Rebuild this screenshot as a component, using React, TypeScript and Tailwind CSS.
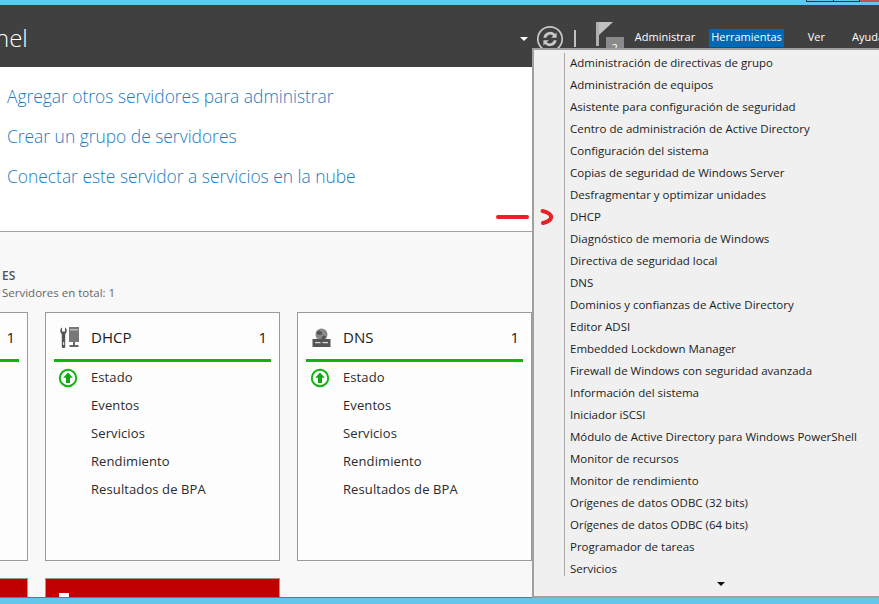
import React from "react";

const font = { fontFamily: '"Open Sans", "Noto Sans", sans-serif' };

const menu = [
  "Administración de directivas de grupo",
  "Administración de equipos",
  "Asistente para configuración de seguridad",
  "Centro de administración de Active Directory",
  "Configuración del sistema",
  "Copias de seguridad de Windows Server",
  "Desfragmentar y optimizar unidades",
  "DHCP",
  "Diagnóstico de memoria de Windows",
  "Directiva de seguridad local",
  "DNS",
  "Dominios y confianzas de Active Directory",
  "Editor ADSI",
  "Embedded Lockdown Manager",
  "Firewall de Windows con seguridad avanzada",
  "Información del sistema",
  "Iniciador iSCSI",
  "Módulo de Active Directory para Windows PowerShell",
  "Monitor de recursos",
  "Monitor de rendimiento",
  "Orígenes de datos ODBC (32 bits)",
  "Orígenes de datos ODBC (64 bits)",
  "Programador de tareas",
  "Servicios",
];

function UpIcon() {
  return (
    <svg width="20" height="20" viewBox="0 0 20 20" className="shrink-0">
      <circle cx="10" cy="10" r="8.200" fill="#fff" stroke="#10b510" strokeWidth="2" />
      <path d="M10 4.500 14.800 9.800H12V15H8V9.800H5.200Z" fill="#10a810" />
    </svg>
  );
}

function DhcpIcon() {
  return (
    <svg width="20" height="22" viewBox="0 0 20 22">
      <path d="M2 1.500V5.500H5V1.500C7 2.500 7.500 6 5.200 8V20.500a1.700 1.700 0 0 1-3.400 0V8C-.5 6 0 2.500 2 1.500Z" fill="#555" />
      <rect x="3" y="16" width="1.200" height="3" fill="#ddd" />
      <rect x="9" y="1" width="10" height="15" fill="#777" />
      <rect x="10" y="3" width="8" height="1.500" fill="#bbb" />
      <rect x="13" y="16" width="2" height="3" fill="#666" />
      <rect x="9.500" y="19" width="9" height="2" fill="#666" />
    </svg>
  );
}

function DnsIcon() {
  return (
    <svg width="19" height="19" viewBox="0 0 19 19">
      <circle cx="9.500" cy="6.500" r="6" fill="#888" />
      <path d="M5 3.500c2-1.500 4-.5 5 1s-1 3-3 2.500S4 5 5 3.500ZM11 8c1.500-.5 3 0 3 1-1 2-3 2.500-4 2.500S9.500 8.500 11 8Z" fill="#555" />
      <rect x="0.500" y="11" width="18" height="8" fill="#555" />
      <rect x="3" y="14" width="5.500" height="1.200" fill="#ddd" />
      <rect x="10.500" y="14" width="5.500" height="1.200" fill="#ddd" />
    </svg>
  );
}

function Card({ icon, title, clipped }: { icon?: React.ReactNode; title?: string; clipped?: boolean }) {
  return (
    <div className="w-[235px] h-[249px] shrink-0 border border-[#9a9a9a] bg-[#fdfdfd] px-[8px]">
      <div className="h-[46px] flex items-center pt-[2px] text-[#1a1a1a]">
        <div className="w-[37px] pl-[6px] flex items-center">{icon}</div>
        <span className="text-[15px] flex-1">{title}</span>
        <span className="text-[15px] pr-[4px]">1</span>
      </div>
      <div className="h-[3px] bg-[#0eb50e]" />
      <div className="flex flex-col pt-[2px] text-[13px] tracking-[0.1px] text-[#2b2b2b]">
        {["Estado", "Eventos", "Servicios", "Rendimiento", "Resultados de BPA"].map((t, i) => (
          <div key={t} className="h-[28px] flex items-center">
            <div className="w-[37px] pl-[4px]">{i === 0 && !clipped ? <UpIcon /> : null}</div>
            <span>{t}</span>
          </div>
        ))}
      </div>
    </div>
  );
}

function RedCard({ mark }: { mark?: boolean }) {
  return (
    <div className="w-[235px] h-[19px] shrink-0 border border-b-0 border-[#9a9a9a] bg-[#c00000] pl-[13px] flex items-end">
      {mark ? <div className="w-[10px] h-[4px] bg-white" /> : null}
    </div>
  );
}

export default function App() {
  return (
    <div className="relative w-[879px] h-[604px] overflow-hidden flex flex-col bg-[#f8f8f8]" style={font}>
      <div className="h-[5px] bg-[#63c6ea] shrink-0 flex justify-end">
        <div className="w-[28px] h-[2px] border border-t-0 border-[#333]" />
        <div className="w-[26px] h-[2px] border border-t-0 border-l-0 border-[#333]" />
        <div className="w-[19px] h-[2px] bg-[#c75050]" />
      </div>
      <header className="h-[62px] shrink-0 bg-[#404040] flex items-center text-white">
        <div className="text-[24px] font-light -ml-[5px] mt-[4px] flex-1 leading-none">nel</div>
        <div className="flex items-center pt-[5px] h-full">
          <span className="w-0 h-0 border-x-[4px] border-x-transparent border-t-[4px] border-t-white mr-[8px]" />
          <svg width="28" height="28" viewBox="0 0 28 28" className="mr-[10px]">
            <circle cx="14" cy="14" r="12.200" fill="none" stroke="#c8c8c8" strokeWidth="1.700" />
            <g transform="translate(14 14) scale(1.2) translate(-14 -14)">
              <path d="M8.500 13a5.700 5.700 0 0 1 9.700-3.200l1.300-1.300v4.500H15l1.700-1.700a3.500 3.500 0 0 0-5.800 1.700ZM19.500 15a5.700 5.700 0 0 1-9.700 3.200l-1.300 1.300V15H13l-1.700 1.700a3.500 3.500 0 0 0 5.800-1.700Z" fill="#c8c8c8" />
            </g>
          </svg>
          <div className="w-[2px] h-[17px] bg-[#c0c0c0] mr-[20px]" />
          <div className="relative w-[28px] h-[34px] mr-[11px]">
            <svg width="18" height="24" viewBox="0 0 18 24" className="absolute left-0 top-0">
              <rect x="0" y="0" width="3" height="24" fill="#b0b0b0" />
              <path d="M3 0H17L3 13Z" fill="#c0c0c0" />
            </svg>
            <div className="absolute left-[10px] top-[15px] w-[18px] h-[14px] bg-[#8a8a8a] text-[11px] text-white flex justify-center leading-none pt-[5px]">2</div>
          </div>
          <span className="text-[11px] mr-[14px] -mt-[2px]">Administrar</span>
          <span className="text-[11px] bg-[#0068b4] h-[18px] flex items-center px-[2px] mr-[24px] -mt-[2px]">Herramientas</span>
          <span className="text-[11px] mr-[27px] -mt-[2px]">Ver</span>
          <span className="text-[11px] w-[27px] overflow-hidden whitespace-nowrap -mt-[2px]">Ayuda</span>
        </div>
      </header>
      <section className="h-[165px] shrink-0 bg-white border-b border-[#a0a0a0] pl-[7px] pt-[18px] flex flex-col gap-[18px] text-[17.400px] font-light text-[#1b7ac4] leading-[22px]">
        <div>Agregar otros servidores para administrar</div>
        <div>Crear un grupo de servidores</div>
        <div>Conectar este servidor a servicios en la nube</div>
      </section>
      <section className="flex-1 w-[532px] overflow-hidden flex flex-col items-end min-h-0">
        <div className="self-start pl-[2px] pt-[35px] h-[80px] shrink-0">
          <div className="text-[12px] font-semibold text-[#555] leading-[17px]">ES</div>
          <div className="text-[11.500px] text-[#666] leading-[18px]">Servidores en total: 1</div>
        </div>
        <div className="flex gap-[17px] justify-end">
          <Card clipped title="" />
          <Card icon={<DhcpIcon />} title="DHCP" />
          <Card icon={<DnsIcon />} title="DNS" />
        </div>
        <div className="flex gap-[17px] justify-end mt-[17px] w-full">
          <RedCard />
          <RedCard mark />
          <div className="w-[235px] shrink-0" />
        </div>
      </section>
      <div className="h-[7px] shrink-0 bg-[#63c6ea] border-t border-[#4a7f99]" />
      <div className="absolute left-[532px] top-[48px] w-[347px] h-[550px] bg-[#f0f0f0] border-2 border-r-0 border-[#a0a0a0] text-[11.500px] text-[#1c1c1c]">
        <div className="ml-[30px] mt-[3px] border-l border-[#a8a8a8] h-[523px] pl-[5px] flex flex-col">
          {menu.map((m) => (
            <div key={m} className="h-[22px] shrink-0 flex items-center whitespace-nowrap relative -top-[1px]">{m}</div>
          ))}
        </div>
        <div className="flex justify-center pl-[29px] mt-[6px] mr-[1px]">
          <span className="w-0 h-0 border-x-[4px] border-x-transparent border-t-[4px] border-t-[#111]" />
        </div>
      </div>
      <svg width="60" height="24" viewBox="0 0 60 24" className="absolute left-[495px] top-[206px]">
        <path d="M3 11H32" stroke="#e8202a" strokeWidth="4" strokeLinecap="round" fill="none" />
        <path d="M47.500 5C53 6 57 9 56 12 55 15 52 16 48 17" stroke="#e8202a" strokeWidth="4" strokeLinecap="round" fill="none" />
      </svg>
    </div>
  );
}
